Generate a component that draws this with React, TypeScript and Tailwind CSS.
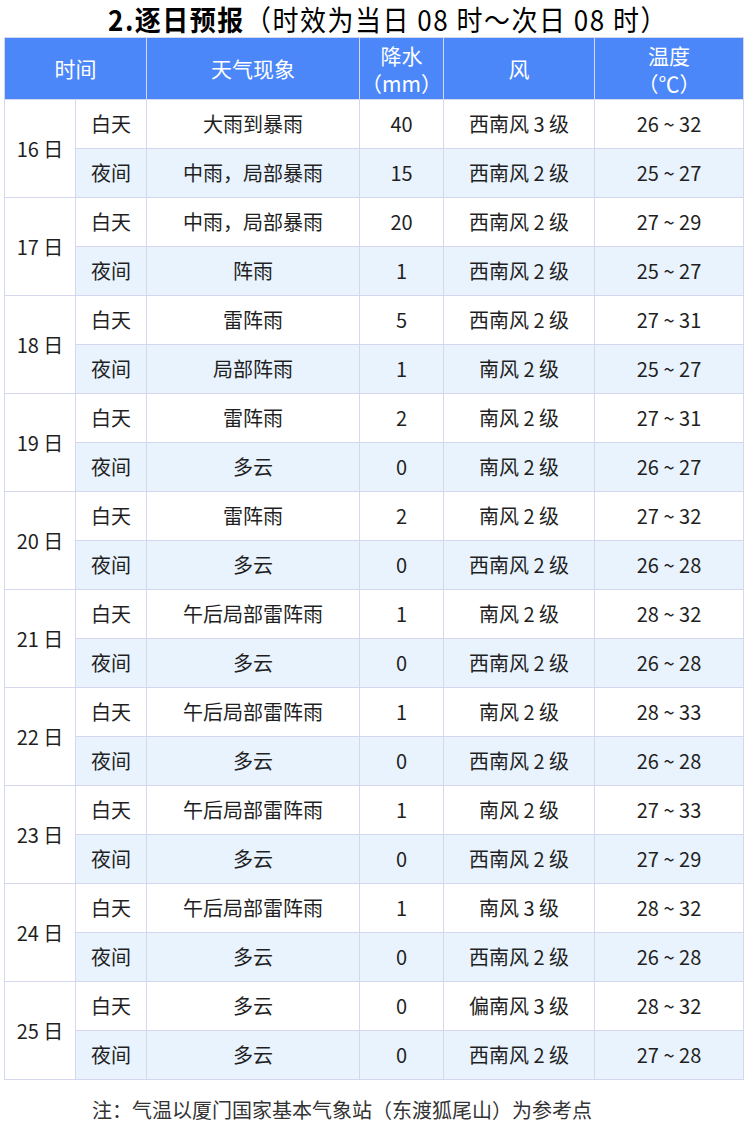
import React from "react";

type Row = { w: string; r: string; wind: string; t: string };
const days: { d: string; day: Row; night: Row }[] = [
  { d: "16 日", day: { w: "大雨到暴雨", r: "40", wind: "西南风 3 级", t: "26 ~ 32" }, night: { w: "中雨，局部暴雨", r: "15", wind: "西南风 2 级", t: "25 ~ 27" } },
  { d: "17 日", day: { w: "中雨，局部暴雨", r: "20", wind: "西南风 2 级", t: "27 ~ 29" }, night: { w: "阵雨", r: "1", wind: "西南风 2 级", t: "25 ~ 27" } },
  { d: "18 日", day: { w: "雷阵雨", r: "5", wind: "西南风 2 级", t: "27 ~ 31" }, night: { w: "局部阵雨", r: "1", wind: "南风 2 级", t: "25 ~ 27" } },
  { d: "19 日", day: { w: "雷阵雨", r: "2", wind: "南风 2 级", t: "27 ~ 31" }, night: { w: "多云", r: "0", wind: "南风 2 级", t: "26 ~ 27" } },
  { d: "20 日", day: { w: "雷阵雨", r: "2", wind: "南风 2 级", t: "27 ~ 32" }, night: { w: "多云", r: "0", wind: "西南风 2 级", t: "26 ~ 28" } },
  { d: "21 日", day: { w: "午后局部雷阵雨", r: "1", wind: "南风 2 级", t: "28 ~ 32" }, night: { w: "多云", r: "0", wind: "西南风 2 级", t: "26 ~ 28" } },
  { d: "22 日", day: { w: "午后局部雷阵雨", r: "1", wind: "南风 2 级", t: "28 ~ 33" }, night: { w: "多云", r: "0", wind: "西南风 2 级", t: "26 ~ 28" } },
  { d: "23 日", day: { w: "午后局部雷阵雨", r: "1", wind: "南风 2 级", t: "27 ~ 33" }, night: { w: "多云", r: "0", wind: "西南风 2 级", t: "27 ~ 29" } },
  { d: "24 日", day: { w: "午后局部雷阵雨", r: "1", wind: "南风 3 级", t: "28 ~ 32" }, night: { w: "多云", r: "0", wind: "西南风 2 级", t: "26 ~ 28" } },
  { d: "25 日", day: { w: "多云", r: "0", wind: "偏南风 3 级", t: "28 ~ 32" }, night: { w: "多云", r: "0", wind: "西南风 2 级", t: "27 ~ 28" } },
];

const td = "border border-[#d5d7ef] text-center align-middle p-0";

export default function App() {
  return (
    <div
      className="w-[752px] h-[1126px] bg-white text-[#1f1f1f]"
      style={{ fontFamily: '"Noto Sans CJK SC", "Noto Sans", sans-serif' }}
    >
      <div className="h-[37px] flex items-center justify-center pt-[1px] pl-[24px] text-[26px] leading-none text-black tracking-[1.5px] scale-y-110">
        <span className="font-bold">2.逐日预报</span>
        <span className="font-normal">（时效为当日 08 时～次日 08 时）</span>
      </div>
      <div className="pl-[4px]">
        <table className="table-fixed border-collapse w-[739px] text-[20px] leading-none">
          <colgroup>
            <col className="w-[71px]" />
            <col className="w-[71px]" />
            <col className="w-[213px]" />
            <col className="w-[84px]" />
            <col className="w-[151px]" />
            <col className="w-[149px]" />
          </colgroup>
          <thead>
            <tr className="h-[62px] bg-[#4b87f8] text-white text-[21px]">
              <th colSpan={2} className={td + " font-normal"}>时间</th>
              <th className={td + " font-normal"}>天气现象</th>
              <th className={td + " font-normal leading-[28px]"}>降水<br />（mm）</th>
              <th className={td + " font-normal"}>风</th>
              <th className={td + " font-normal leading-[28px]"}>温度<br />（℃）</th>
            </tr>
          </thead>
          <tbody>
            {days.map((g) => (
              <React.Fragment key={g.d}>
                <tr className="h-[49px] bg-white">
                  <td rowSpan={2} className={td + " bg-white"}>{g.d}</td>
                  <td className={td}>白天</td>
                  <td className={td}>{g.day.w}</td>
                  <td className={td}>{g.day.r}</td>
                  <td className={td}>{g.day.wind}</td>
                  <td className={td}>{g.day.t}</td>
                </tr>
                <tr className="h-[49px] bg-[#e9f3fe]">
                  <td className={td}>夜间</td>
                  <td className={td}>{g.night.w}</td>
                  <td className={td}>{g.night.r}</td>
                  <td className={td}>{g.night.wind}</td>
                  <td className={td}>{g.night.t}</td>
                </tr>
              </React.Fragment>
            ))}
          </tbody>
        </table>
      </div>
      <div className="pt-[20px] pl-[92px] text-[20px] leading-none text-[#333]">
        注：气温以厦门国家基本气象站（东渡狐尾山）为参考点
      </div>
    </div>
  );
}
